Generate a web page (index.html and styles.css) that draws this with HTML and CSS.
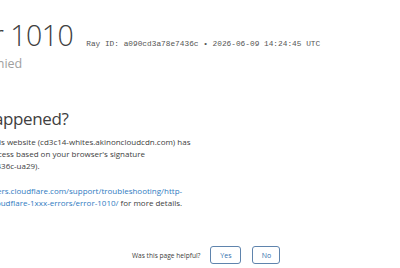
FILE: index.html
```html
<!DOCTYPE html>
<html lang="en">
<head>
<meta charset="utf-8">
<title>Access denied | cd3c14-whites.akinoncloudcdn.com used Cloudflare to restrict access</title>
<link rel="stylesheet" href="styles.css">
</head>
<body>
<div class="page">
  <div class="content">
    <header class="head">
      <h1 class="title"><span class="type">Error</span> <span class="code">1010</span><span class="ray">Ray ID: a090cd3a78e7436c &bull; 2026-06-09 14:24:45 UTC</span></h1>
      <h2 class="sub">Access denied</h2>
    </header>
    <section class="what">
      <h2 class="what-title">What happened?</h2>
      <p class="text">The owner of this website (cd3c14-whites.akinoncloudcdn.com) has<br>banned your access based on your browser's signature<br>(a090cd3a78e7436c-ua29).</p>
      <p class="text more"><a class="link" href="#">https://developers.cloudflare.com/support/troubleshooting/http-<br>status-codes/cloudflare-1xxx-errors/error-1010/</a> for more details.</p>
    </section>
  </div>
  <div class="feedback">
    <span class="ask">Was this page helpful?</span>
    <button class="btn yes" type="button">Yes</button>
    <button class="btn no" type="button">No</button>
  </div>
</div>
</body>
</html>
```

FILE: styles.css
```css
html, body {
  margin: 0;
  padding: 0;
  background: #fff;
  overflow: hidden;
}
body {
  font-family: "Open Sans", "Noto Sans", sans-serif;
  color: #404040;
  width: 400px;
  height: 268px;
}
.page {
  display: flex;
  flex-direction: column;
}
.content {
  margin-left: -60px;
  padding-top: 17px;
}
.title {
  margin: 0;
  font-weight: 300;
  font-size: 28.5px;
  line-height: 36px;
  letter-spacing: -0.5px;
  color: #404040;
  white-space: nowrap;
}
.ray {
  font-family: "Liberation Mono", monospace;
  font-size: 7.8px;
  line-height: 1;
  letter-spacing: 0;
  font-weight: 400;
  color: #555;
  margin-left: 13px;
}
.sub {
  margin: 2px 0 0;
  font-weight: 400;
  font-size: 12.5px;
  line-height: 18px;
  color: #a0a0a0;
}
.what {
  margin-top: 35px;
}
.what-title {
  margin: 0;
  font-weight: 400;
  font-size: 17px;
  line-height: 22px;
  letter-spacing: -0.4px;
  color: #404040;
}
.text {
  margin: 6px 0 0;
  font-size: 8px;
  line-height: 12px;
  color: #404040;
  white-space: nowrap;
}
.text.more {
  margin-top: 13px;
}
.link {
  color: #2f7bbf;
  text-decoration: none;
}
.feedback {
  display: flex;
  align-items: center;
  margin-left: 132px;
  margin-top: 37px;
  font-size: 6.6px;
  color: #404040;
}
.ask {
  margin-right: 10px;
}
.btn {
  font-family: "Open Sans", sans-serif;
  font-size: 7px;
  color: #2f6fae;
  background: #fff;
  border: 1px solid #5f84ad;
  border-radius: 3px;
  height: 18px;
  padding: 0;
}
.yes {
  width: 31px;
}
.no {
  width: 28px;
  margin-left: 11px;
}
```
